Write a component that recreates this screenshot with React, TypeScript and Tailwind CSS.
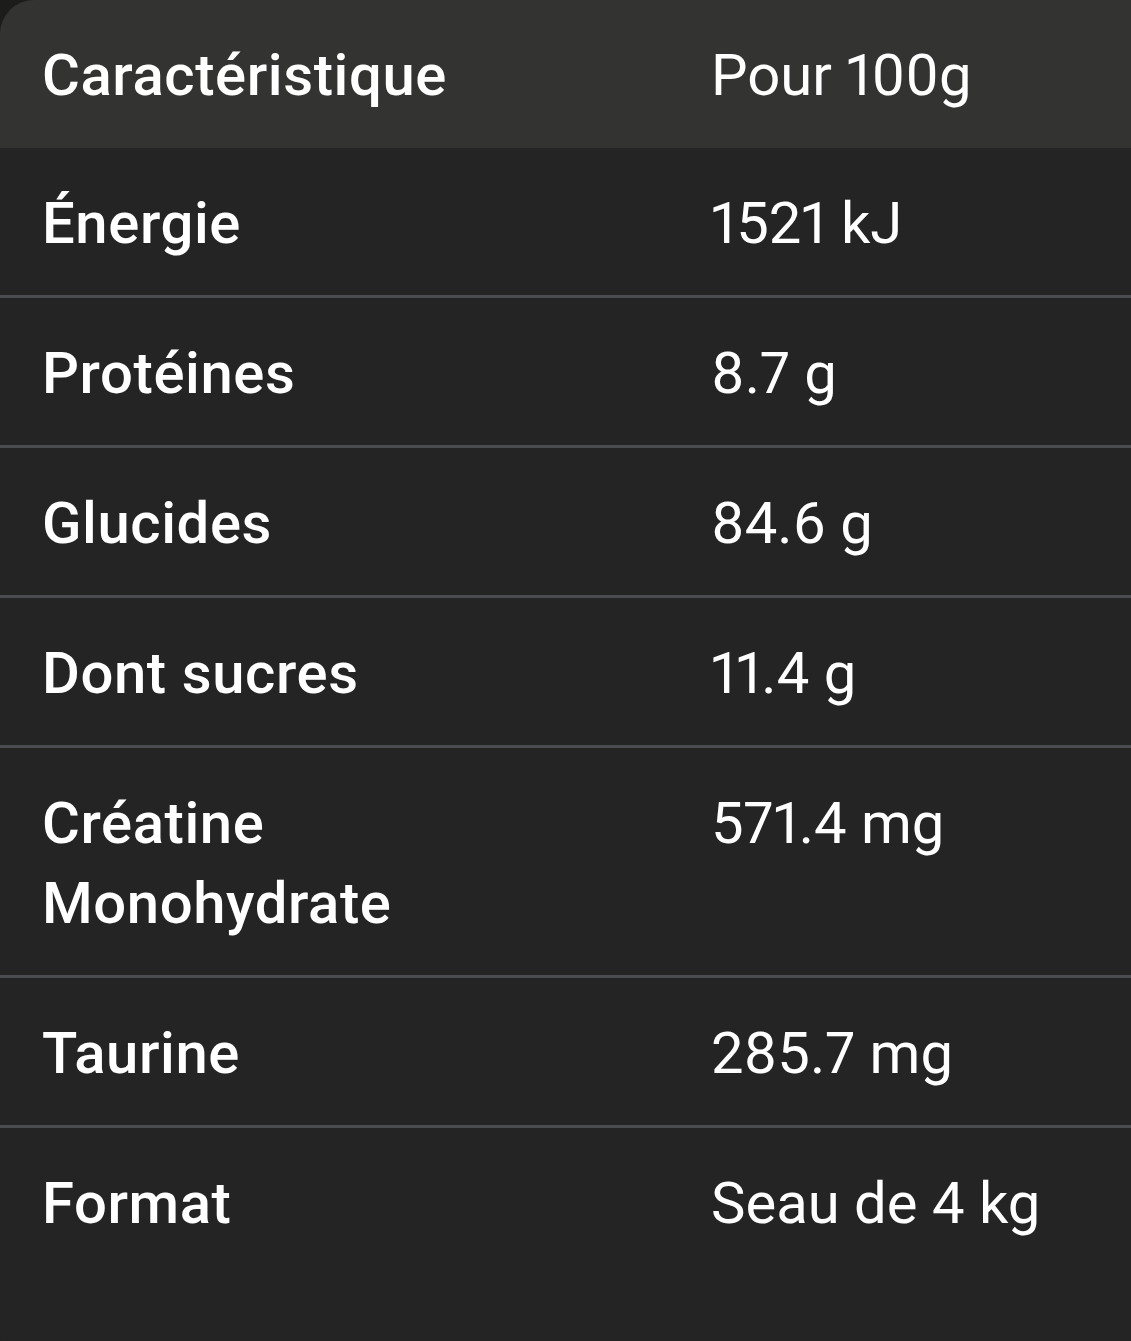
import React from "react";

const rows: [string, string][] = [
  ["Énergie", "1521 kJ"],
  ["Protéines", "8.7 g"],
  ["Glucides", "84.6 g"],
  ["Dont sucres", "11.4 g"],
  ["Créatine Monohydrate", "571.4 mg"],
  ["Taurine", "285.7 mg"],
  ["Format", "Seau de 4 kg"],
];

export default function App() {
  return (
    <div className="w-[1131px] h-[1341px] overflow-hidden bg-[#1c1d1b]" style={{ fontFamily: "Roboto, sans-serif" }}>
      <div className="w-[1131px] h-[1372px] rounded-l-[34px] bg-[#232423] overflow-hidden">
        <div className="grid grid-cols-[711px_1fr] bg-[#333432] h-[148px] pt-[35px] text-[58px] leading-[80px] text-white">
          <div className="pl-[42px] font-medium tracking-[0.6px]">Caractéristique</div>
          <div className="font-normal proportional-nums">Pour 100g</div>
        </div>
        {rows.map(([k, v], i) => (
          <div
            key={k}
            className={
              "grid grid-cols-[711px_1fr] pt-[35px] pb-[32px] text-[58px] leading-[80px] text-white " +
              (i < rows.length - 1 ? "border-b-[3px] border-[#4a4c4f]" : "")
            }
          >
            <div className="pl-[42px] pr-[120px] font-medium tracking-[0.6px]">{k}</div>
            <div className="font-normal proportional-nums">{v}</div>
          </div>
        ))}
      </div>
    </div>
  );
}
